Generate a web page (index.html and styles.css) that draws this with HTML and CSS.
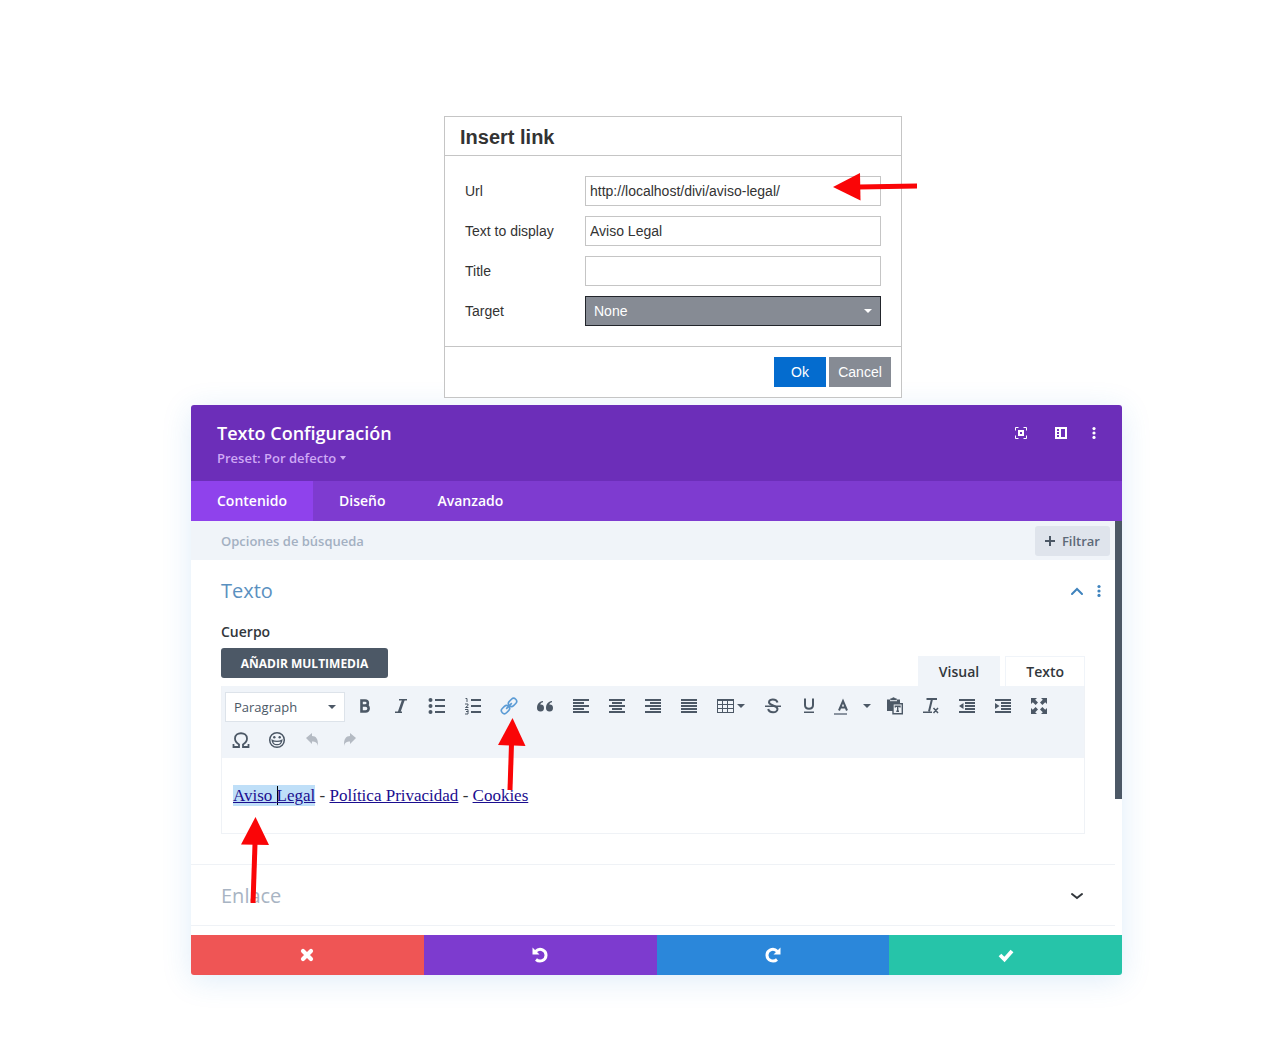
FILE: index.html
```html
<!DOCTYPE html>
<html lang="es">
<head>
  <meta charset="UTF-8">
  <meta name="viewport" content="width=device-width, initial-scale=1.0">
  <title>Texto Configuración</title>
  <link rel="stylesheet" href="styles.css">
</head>
<body>

  <!-- Insert link -->
  <div class="dialog-wrap">
    <form class="dialog">
      <h1 class="dialog-title">Insert link</h1>
      <div class="dialog-body">
        <label for="url">Url</label>
        <input type="text" id="url" value="http://localhost/divi/aviso-legal/">
        <label for="display">Text to display</label>
        <input type="text" id="display" value="Aviso Legal">
        <label for="title">Title</label>
        <input type="text" id="title">
        <label for="target">Target</label>
        <div class="select-box">
          <select id="target">
            <option>None</option>
            <option>New window</option>
          </select>
          <span class="caret"></span>
        </div>
      </div>
      <div class="dialog-foot">
        <button type="submit" class="ok">Ok</button>
        <button type="button" class="cancel">Cancel</button>
      </div>
      <svg class="arrow arrow-url" width="84" height="28" viewBox="0 0 84 28"><path d="M0 14 27 0l.5 27.500z"/><path d="M26 11.500 84 10.500v5l-58 1z"/></svg>
    </form>
  </div>

  <!-- Configuración del módulo -->
  <main class="panel">
    <header class="panel-head">
      <div>
        <h2>Texto Configuración</h2>
        <button type="button" class="preset">Preset: Por defecto <span class="caret"></span></button>
      </div>
      <div class="head-icons">
        <button type="button" aria-label="Expandir"><svg width="12" height="12" viewBox="0 0 12 12"><path d="M.5 3.500v-3h3M8.500.500h3v3M11.500 8.500v3h-3M3.500 11.500h-3v-3" fill="none" stroke="#fff"/><path d="M4 4h4v4H4z" fill="none" stroke="#fff" stroke-width="2"/></svg></button>
        <button type="button" aria-label="Acoplar"><svg width="12" height="12" viewBox="0 0 12 12"><path fill="#fff" fill-rule="evenodd" d="M0 0h12v12H0zM6 2v8h4V2zM2 2v2h2V2zM2 5v2h2V5zM2 8v2h2V8z"/></svg></button>
        <button type="button" aria-label="Más opciones"><svg width="4" height="12" viewBox="0 0 4 12" fill="#fff"><circle cx="2" cy="1.600" r="1.600"/><circle cx="2" cy="6" r="1.600"/><circle cx="2" cy="10.400" r="1.600"/></svg></button>
      </div>
    </header>

    <nav class="tabs">
      <a href="#contenido" class="active">Contenido</a>
      <a href="#diseno">Diseño</a>
      <a href="#avanzado">Avanzado</a>
    </nav>

    <div class="panel-body">
      <div class="content">
        <div class="search">
          <input type="text" placeholder="Opciones de búsqueda" aria-label="Opciones de búsqueda">
          <button type="button"><svg width="10" height="10" viewBox="0 0 10 10"><path d="M5 0v10M0 5h10" stroke="#4c5866" stroke-width="2"/></svg>Filtrar</button>
        </div>

        <section class="group">
          <div class="group-head open">
            <h3>Texto</h3>
            <button type="button" aria-label="Cerrar"><svg width="16" height="16" viewBox="0 0 16 16"><path d="M3 12l5-5 5 5" fill="none" stroke="#3f83bd" stroke-width="2" stroke-linecap="round"/></svg></button>
            <button type="button" aria-label="Más opciones"><svg width="8" height="14" viewBox="0 0 8 14" fill="#3f83bd"><circle cx="4" cy="3.500" r="1.600"/><circle cx="4" cy="8" r="1.600"/><circle cx="4" cy="12.400" r="1.600"/></svg></button>
          </div>
          <div class="field">
            <div class="field-label">Cuerpo</div>
            <div class="editor-top">
              <button type="button" class="media">AÑADIR MULTIMEDIA</button>
              <div class="editor-tabs">
                <button type="button" class="active">Visual</button>
                <button type="button">Texto</button>
              </div>
            </div>
            <div class="editor">
              <div class="toolbar">
                <div class="select-box format">
                  <select aria-label="Formato">
                    <option>Paragraph</option>
                    <option>Heading 1</option>
                  </select>
                  <span class="caret"></span>
                </div>
                <button type="button" aria-label="Negrita"><svg viewBox="0 0 18 18"><path d="M5.500 3.500H9c3.800 0 3.800 5 0 5H5.500zM5.500 8.500h4c4.200 0 4.200 6 0 6h-4z" fill="none" stroke="#4c5866" stroke-width="2.600"/></svg></button>
                <button type="button" aria-label="Cursiva"><svg viewBox="0 0 18 18"><path d="M7 2.700h8M3 15.300h7" fill="none" stroke="#4c5866" stroke-width="1.400"/><path d="M11.500 2.500 7 15.500" stroke="#4c5866" stroke-width="2.600"/></svg></button>
                <button type="button" aria-label="Lista"><svg viewBox="0 0 18 18"><circle cx="2.500" cy="3" r="2"/><circle cx="2.500" cy="9" r="2"/><circle cx="2.500" cy="15" r="2"/><path d="M7 2h10v2H7zM7 8h10v2H7zM7 14h10v2H7z"/></svg></button>
                <button type="button" aria-label="Lista numerada"><svg viewBox="0 0 18 18"><path d="M7 2h10v2H7zM7 8h10v2H7zM7 14h10v2H7z"/><path d="M1.500 1.500H3V5M1 7h3v1.500L1.500 10.500H4.500M1 12.500h3v2H2M4 14v3H1" fill="none" stroke="#4c5866"/></svg></button>
                <button type="button" aria-label="Enlace"><svg viewBox="0 0 18 18"><g fill="none" stroke="#5b9bd5" stroke-width="1.600" transform="rotate(-45 9 9)"><rect x="-.5" y="6" width="9" height="6" rx="3"/><rect x="9.500" y="6" width="9" height="6" rx="3"/><path d="M5 9h8"/></g></svg></button>
                <button type="button" aria-label="Cita"><svg viewBox="0 0 18 18"><path d="M7 4C3 4.500 1 7 1 11a3.500 3.500 0 1 0 3.200-3.500C4.600 6.300 5.500 5.500 7 5.200zM16 4c-4 .5-6 3-6 7a3.500 3.500 0 1 0 3.200-3.500c.4-1.200 1.300-2 2.800-2.300z"/></svg></button>
                <button type="button" aria-label="Alinear a la izquierda"><svg viewBox="0 0 18 18"><path d="M1 2h16v2H1zM1 5h11v2H1zM1 8h16v2H1zM1 11h11v2H1zM1 14h16v2H1z"/></svg></button>
                <button type="button" aria-label="Centrar"><svg viewBox="0 0 18 18"><path d="M1 2h16v2H1zM4 5h10v2H4zM1 8h16v2H1zM4 11h10v2H4zM1 14h16v2H1z"/></svg></button>
                <button type="button" aria-label="Alinear a la derecha"><svg viewBox="0 0 18 18"><path d="M1 2h16v2H1zM6 5h11v2H6zM1 8h16v2H1zM6 11h11v2H6zM1 14h16v2H1z"/></svg></button>
                <button type="button" aria-label="Justificar"><svg viewBox="0 0 18 18"><path d="M1 2h16v2H1zM1 5h16v2H1zM1 8h16v2H1zM1 11h16v2H1zM1 14h16v2H1z"/></svg></button>
                <button type="button" class="split" aria-label="Tabla"><svg viewBox="0 0 18 18"><path fill-rule="evenodd" d="M0 2h17v14H0zM1 4v3h4V4zM6 4v3h4V4zM11 4v3h5V4zM1 8v3h4V8zM6 8v3h4V8zM11 8v3h5V8zM1 12v3h4v-3zM6 12v3h4v-3zM11 12v3h5v-3z"/></svg><span class="caret"></span></button>
                <button type="button" aria-label="Tachado"><svg viewBox="0 0 18 18"><path d="M13.500 5.500C12.500 1.500 5 1.500 5 5.300 5 9 13.500 8 13.500 12c0 4.400-8.500 4.300-9.300 0" fill="none" stroke="#4c5866" stroke-width="2"/><path d="M1 8.500h16V10H1z"/></svg></button>
                <button type="button" aria-label="Subrayado"><svg viewBox="0 0 18 18"><path d="M5 1.500V8c0 5 8 5 8 0V1.500" fill="none" stroke="#4c5866" stroke-width="2"/><path d="M4 14.500h10V16H4z"/></svg></button>
                <button type="button" class="split color" aria-label="Color de texto"><svg viewBox="0 0 18 18"><path d="M6 13.500 10 4l4 9.500M7.500 10.500h5" fill="none" stroke="#4c5866" stroke-width="2"/><path d="M1 16h13v2H1z" fill="#8a93a0"/></svg><span class="caret"></span></button>
                <button type="button" aria-label="Pegar como texto"><svg viewBox="0 0 18 18"><path d="M1 2.500h3.500V1.200H6Q7.500-.5 9 1.200h1.500v1.300H14V6H7v8H1z"/><path d="M4 3.700h7" stroke="#f0f4f9"/><path d="M7 6.700h9.300v10H7z" fill="#f0f4f9" stroke="#4c5866" stroke-width="1.400"/><path d="M9.300 10.500V9.300H14v1.200M11.700 9.500v5M10.300 14.300H13" fill="none" stroke="#4c5866" stroke-width="1.400"/></svg></button>
                <button type="button" aria-label="Limpiar formato"><svg viewBox="0 0 18 18"><path d="M4.500 2H15M10 2 7 14.500" fill="none" stroke="#4c5866" stroke-width="2"/><path d="M1 15.300h9M11.500 11l4.500 5M16 11l-4.500 5" stroke="#4c5866" stroke-width="1.500"/></svg></button>
                <button type="button" aria-label="Reducir sangría"><svg viewBox="0 0 18 18"><path d="M1 2h16v2H1zM7 5h10v2H7zM7 8h10v2H7zM7 11h10v2H7zM1 14h16v2H1zM5.500 6v6L1 9z"/></svg></button>
                <button type="button" aria-label="Aumentar sangría"><svg viewBox="0 0 18 18"><path d="M1 2h16v2H1zM7 5h10v2H7zM7 8h10v2H7zM7 11h10v2H7zM1 14h16v2H1zM1 6v6l4.500-3z"/></svg></button>
                <button type="button" aria-label="Pantalla completa"><svg viewBox="0 0 18 18"><path d="M1 1h6L5.200 2.800 8 5.600 5.600 8 2.800 5.200 1 7zM17 1v6l-1.800-1.800L12.400 8 10 5.600l2.800-2.800L11 1zM1 17v-6l1.800 1.800L5.600 10 8 12.400l-2.800 2.800L7 17zM17 17h-6l1.800-1.800-2.800-2.800 2.400-2.400 2.800 2.800L17 11z"/></svg></button>
                <button type="button" aria-label="Carácter especial"><svg viewBox="0 0 18 18"><path d="M1.500 13v3H7v-2.500C4.500 12 3 10 3 7.500c0-7 12-7 12 0 0 2.500-1.500 4.500-4 6V16h5.500v-3" fill="none" stroke="#4c5866" stroke-width="1.800"/></svg></button>
                <button type="button" aria-label="Emoticono"><svg viewBox="0 0 18 18"><circle cx="9" cy="9" r="7.300" fill="none" stroke="#4c5866" stroke-width="1.500"/><circle cx="6.300" cy="6.300" r="1.200"/><circle cx="11.700" cy="6.300" r="1.200"/><path d="M4.200 9.200c2.500 1.500 7.100 1.500 9.600 0-.6 6-9 6-9.600 0z" fill="none" stroke="#4c5866" stroke-width="1.300"/></svg></button>
                <button type="button" aria-label="Deshacer" disabled><svg viewBox="0 0 18 18"><path d="M2 7l6-5v3c4 0 6.500 3 5.800 10-.5-3.500-2.500-4.500-5.800-4.500V13z"/></svg></button>
                <button type="button" aria-label="Rehacer" disabled><svg viewBox="0 0 18 18"><path d="M16 7l-6-5v3C6 5 3.500 8 4.200 15c.5-3.500 2.500-4.500 5.800-4.500V13z"/></svg></button>
              </div>
              <p class="editor-text"><a href="#aviso-legal" class="selected">Aviso <span class="cursor"></span>Legal</a> - <a href="#politica-privacidad">Política Privacidad</a> - <a href="#cookies">Cookies</a></p>
            </div>
          </div>
        </section>

        <section class="group">
          <div class="group-head">
            <h3>Enlace</h3>
            <button type="button" aria-label="Abrir"><svg width="16" height="16" viewBox="0 0 16 16"><path d="M3 7l5 4 5-4" fill="none" stroke="#32373c" stroke-width="2" stroke-linecap="round"/></svg></button>
          </div>
        </section>
      </div>
      <div class="scrollbar"></div>
    </div>

    <footer class="actions">
      <button type="button" class="discard" aria-label="Descartar"><svg viewBox="0 0 16 16"><path d="M4 4l8 8M12 4l-8 8" stroke-width="4.200" stroke-linecap="round"/></svg></button>
      <button type="button" class="undo" aria-label="Deshacer"><svg viewBox="0 0 16 16"><path d="M3.500 4.500C8-.2 14.300 3.500 14 8.500 13.700 14 7.500 15.500 4 12.500" stroke-width="3"/><path d="M.5.500v7h7z" fill="#fff" stroke="none"/></svg></button>
      <button type="button" class="redo" aria-label="Rehacer"><svg viewBox="0 0 16 16"><path d="M12.500 4.500C8-.2 1.700 3.500 2 8.500 2.300 14 8.500 15.500 12 12.500" stroke-width="3"/><path d="M15.500.500v7h-7z" fill="#fff" stroke="none"/></svg></button>
      <button type="button" class="save" aria-label="Guardar"><svg viewBox="0 0 16 16"><path d="M2 8l4.500 4.500L14 4" stroke-width="3.800"/></svg></button>
    </footer>

    <svg class="arrow arrow-link" width="28" height="72" viewBox="0 0 28 72"><path d="M14.500 0 27.500 28 0 27z"/><path d="M11 26h5l-1.500 46h-5z"/></svg>
    <svg class="arrow arrow-text" width="28" height="86" viewBox="0 0 28 86"><path d="M14.500 0 28 28 0 27.500z"/><path d="M11.500 27h5l-2 59h-5z"/></svg>
  </main>

</body>
</html>
```
FILE: styles.css
```css
* { box-sizing: border-box; }
body { margin: 0; padding: 116px 161px 63px 191px; background-color: #fff; font-family: "Open Sans", sans-serif; }
h1, h2, h3, p { margin: 0; }
button, input, select { font-family: inherit; margin: 0; border: 0; border-radius: 0; }
button { padding: 0; background: none; cursor: pointer; }
svg { display: block; flex: none; }
select { appearance: none; width: 100%; height: 100%; background: none; color: inherit; }
.caret { width: 0; height: 0; border: 4px solid transparent; border-top-color: currentColor; border-bottom: 0; }
.select-box { position: relative; height: 30px; }
.select-box .caret { position: absolute; top: 12px; right: 8px; pointer-events: none; }

/* Insert link */
.dialog-wrap { padding-left: 33px; margin-bottom: 7px; position: relative; z-index: 1; }
.dialog { position: relative; max-width: 458px; margin: 0 auto; background-color: #fff; border: 1px solid #c5c5c5; font-family: "Liberation Sans", Arial, sans-serif; font-size: 14px; color: #333; }
.dialog-title { padding: 0 15px; font-size: 20px; line-height: 38px; height: 39px; border-bottom: 1px solid #c5c5c5; padding-top: 1px; }
.dialog-body { display: grid; grid-template-columns: 120px 1fr; row-gap: 10px; align-items: center; padding: 20px; }
.dialog-body input { width: 100%; height: 30px; padding: 0 4px; border: 1px solid #c5c5c5; font-size: 14px; color: #333; }
.dialog-body .select-box { background-color: #868b94; border: 1px solid #22252b; color: #fff; }
.dialog-body select { padding: 0 8px; font-size: 14px; }
.dialog-foot { display: flex; justify-content: flex-end; gap: 3px; padding: 10px; border-top: 1px solid #c5c5c5; }
.dialog-foot button { height: 30px; font-size: 14px; color: #fff; }
.dialog-foot .ok { width: 52px; background-color: #046ccf; }
.dialog-foot .cancel { width: 62px; background-color: #868b94; }

/* Panel */
.panel { position: relative; border-radius: 3px; background-color: #fff; box-shadow: 0 5px 30px rgba(43, 135, 218, 0.15); }
.panel-head { display: flex; justify-content: space-between; height: 76px; padding: 16px 26px; border-radius: 3px 3px 0 0; background-color: #6c2eb9; color: #fff; }
.panel-head h2 { font-size: 18px; font-weight: 600; line-height: 25px; }
.preset { display: flex; align-items: center; gap: 4px; font-size: 13px; font-weight: 600; line-height: 24px; color: #cfa9f5; }
.preset .caret { border-width: 3px; border-top-width: 4px; border-bottom: 0; }
.head-icons { display: flex; align-items: center; height: 24px; gap: 28px; }
.head-icons button:last-child { margin-left: -3px; }
.tabs { display: flex; height: 40px; background-color: #7e3bd0; }
.tabs a { padding: 0 26px; font-size: 14px; font-weight: 600; line-height: 40px; color: #fff; text-decoration: none; }
.tabs .active { background-color: #8f42ec; }
.panel-body { display: flex; padding-bottom: 9px; }
.content { flex: 1; min-width: 0; }
.scrollbar { width: 7px; height: 278px; background-color: #4c5866; }

.search { display: flex; justify-content: space-between; align-items: center; height: 39px; padding: 0 5px 0 30px; background-color: #f0f4f9; }
.search input { flex: 1; min-width: 0; padding: 0; background: none; font-size: 13px; font-weight: 600; }
.search input::placeholder { color: #a3b0c2; opacity: 1; }
.search button { display: flex; align-items: center; gap: 7px; height: 30px; padding: 0 10px; border-radius: 3px; background-color: #dfe4ec; font-size: 13px; font-weight: 600; color: #5c6978; }

.group { border-bottom: 1px solid #eff2f6; }
.group-head { display: flex; align-items: center; gap: 10px; height: 60px; padding: 0 30px; }
.group-head h3 { flex: 1; font-size: 20px; font-weight: 400; color: #a8b4c3; }
.group-head.open { padding-right: 12px; }
.group-head.open h3 { color: #5a90c0; }
.field { padding: 0 30px 30px; }
.field-label { margin-bottom: 4px; font-size: 14px; font-weight: 600; line-height: 24px; color: #32373c; }
.editor-top { display: flex; justify-content: space-between; height: 38px; }
.media { width: 167px; height: 30px; border-radius: 3px; background-color: #4c5866; font-size: 12px; font-weight: 700; color: #fff; }
.editor-tabs { display: flex; align-items: flex-end; gap: 5px; }
.editor-tabs button { height: 30px; padding: 0 20px; border: 1px solid #f0f4f9; border-bottom: 0; font-size: 14px; font-weight: 600; color: #32373c; }
.editor-tabs .active { background-color: #f0f4f9; }

.editor { border: 1px solid #eff2f6; border-top: 0; }
.toolbar { display: flex; flex-wrap: wrap; padding: 3px 1px 1px; background-color: #f0f4f9; }
.toolbar button { display: flex; align-items: center; justify-content: center; width: 36px; height: 34px; color: #4c5866; }
.toolbar svg { width: 18px; height: 18px; fill: #4c5866; }
.toolbar button:disabled svg { fill: #b4bac3; }
.toolbar .split { width: 48px; gap: 2px; }
.toolbar .color { width: 50px; gap: 12px; }
.format { width: 120px; margin: 3px 2px 0; border: 1px solid #dde3ea; background-color: #fff; color: #4c5866; }
.format select { padding: 0 8px; font-size: 13px; font-weight: 500; }
.editor-text { padding: 26px 11px 25px; font-family: Georgia, "Liberation Serif", serif; font-size: 17px; line-height: 24px; color: #333; }
.editor-text a { color: #1a0d8f; }
.editor-text .selected { padding: 1px 0; background-color: #bfdff8; }
.cursor { border-left: 1px solid #000; margin-right: -1px; }

.actions { display: flex; border-radius: 0 0 3px 3px; overflow: hidden; }
.actions button { flex: 1; display: flex; align-items: center; justify-content: center; height: 40px; }
.actions svg { width: 16px; height: 16px; fill: none; stroke: #fff; }
.discard { background-color: #ef5555; }
.undo { background-color: #7d3bcf; }
.redo { background-color: #2b87da; }
.save { background-color: #26c4a9; }

/* Flechas rojas */
.arrow { position: absolute; fill: #fa0507; pointer-events: none; }
.arrow-url { top: 56px; right: -16px; }
.arrow-link { top: 313px; left: 307px; }
.arrow-text { top: 412px; left: 50px; }
```
